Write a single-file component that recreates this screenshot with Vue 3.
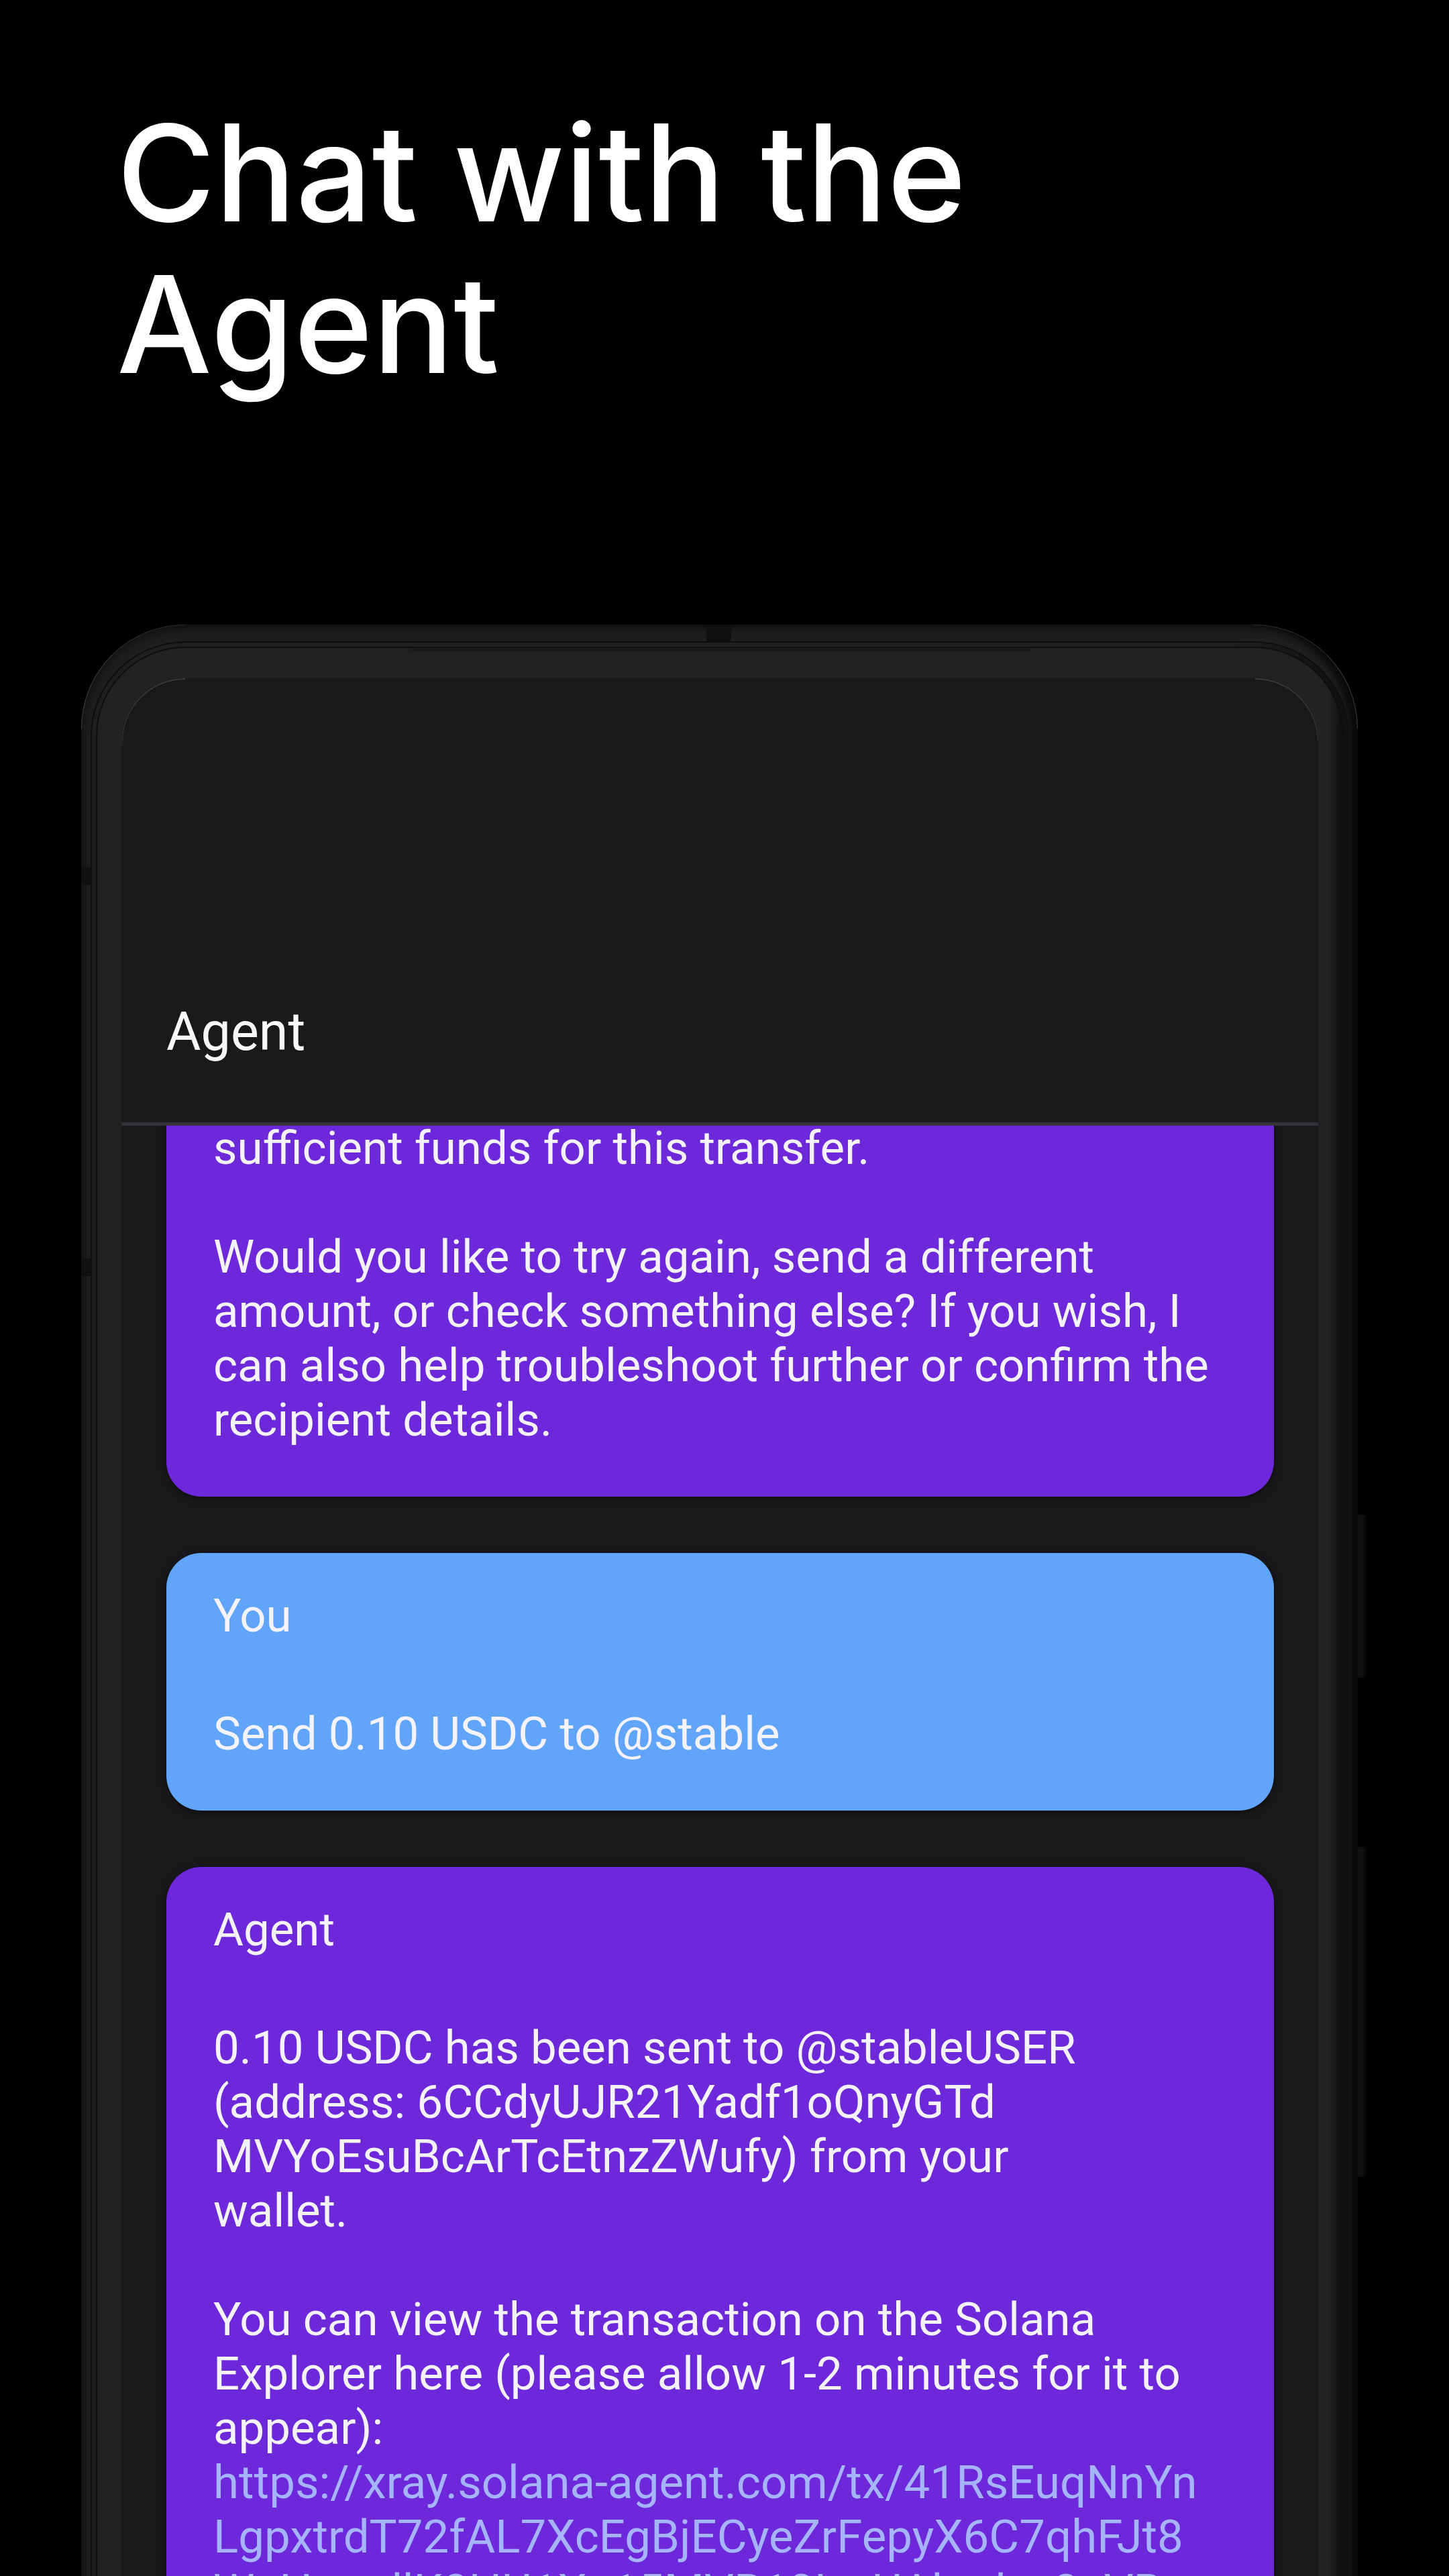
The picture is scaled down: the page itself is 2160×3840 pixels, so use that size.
<script setup>
const messages = [
  {
    kind: 'agent',
    scrolled: true,
    text: `sufficient funds for this transfer.

Would you like to try again, send a different
amount, or check something else? If you wish, I
can also help troubleshoot further or confirm the
recipient details.`,
  },
  {
    kind: 'user',
    sender: 'You',
    text: 'Send 0.10 USDC to @stable',
  },
  {
    kind: 'agent',
    sender: 'Agent',
    text: `0.10 USDC has been sent to @stableUSER
(address: 6CCdyUJR21Yadf1oQnyGTd
MVYoEsuBcArTcEtnzZWufy) from your
wallet.

You can view the transaction on the Solana
Explorer here (please allow 1-2 minutes for it to
appear):`,
    link: [
      'https://xray.solana-agent.com/tx/41RsEuqNnYn',
      'LgpxtrdT72fAL7XcEgBjECyeZrFepyX6C7qhFJt8',
      'WuHxnrdlK8HU1Xa15MVR10LwUAbxdxs8aVR',
    ],
  },
]
</script>

<template>
  <main class="page">
    <h1 class="title">Chat with the Agent</h1>

    <div class="phone">
      <span class="antenna antenna-top"></span>
      <span class="antenna antenna-left-upper"></span>
      <span class="antenna antenna-left-lower"></span>
      <span class="key key-power"></span>
      <span class="key key-volume"></span>

      <div class="ring">
        <div class="bezel">
          <span class="earpiece"></span>
          <section class="screen">
            <header class="bar">
              <h2 class="bar-title">Agent</h2>
            </header>
            <div class="chat">
              <article
                v-for="(message, i) in messages"
                :key="i"
                class="card"
                :class="[message.kind, { scrolled: message.scrolled }]"
              >
                <h3 v-if="message.sender" class="sender">{{ message.sender }}</h3>
                <p class="text">{{ message.text }}</p>
                <a v-if="message.link" class="link" :href="message.link.join('')">{{ message.link.join('\n') }}</a>
              </article>
            </div>
          </section>
        </div>
      </div>
    </div>
  </main>
</template>

<style>
body {
  margin: 0;
  background: #000;
}
</style>

<style scoped>
.page {
  display: flex;
  flex-direction: column;
  height: 100vh;
  overflow: hidden;
  background: #000;
  font-family: Roboto, "Liberation Sans", sans-serif;
}

.title {
  flex: none;
  margin: 0 174px 335px;
  padding-top: 144px;
  color: #fff;
  font: 500 200px/226px Inter, "Open Sans", sans-serif;
}

/* device frame */
.phone {
  position: relative;
  flex: none;
  margin: 0 136px 0 121px;
  padding: 25px 13px 0 14px;
  border-radius: 155px 155px 0 0;
  background: #202020;
  box-shadow: inset -12px 0 8px #0b0b0b, inset 0 0 24px #0a0a0a;
}

.ring {
  padding: 6px 6px 0;
  border: 2px solid #0e0e0e;
  border-bottom: 0;
  border-radius: 141px 141px 0 0;
  background: linear-gradient(to right, #1d1d1d, #202020 10%, #202020 90%, #101010);
}

.bezel {
  position: relative;
  padding: 45px 36px 0 37px;
  border: 2px solid #0e0e0e;
  border-bottom: 0;
  border-radius: 133px 133px 0 0;
  background: linear-gradient(to right, #202020, #222 12px, #222 calc(100% - 22px), #0f0f0f);
}

.earpiece {
  position: absolute;
  top: 0;
  left: 50%;
  width: 50%;
  height: 5px;
  background: #1b1b1b;
  transform: translateX(-50%);
}

.antenna {
  position: absolute;
  background: #101010;
}

.antenna-top {
  top: 0;
  left: 49%;
  width: 37px;
  height: 25px;
}

.antenna-left-upper,
.antenna-left-lower {
  left: 0;
  width: 14px;
  height: 26px;
}

.antenna-left-upper {
  top: 362px;
}

.antenna-left-lower {
  top: 945px;
}

.key {
  position: absolute;
  left: 100%;
  width: 12px;
  border-radius: 0 2px 2px 0;
  background: linear-gradient(to right, #111 8px, #0a0a0a 9px);
}

.key-power {
  top: 1327px;
  height: 243px;
}

.key-volume {
  top: 1822px;
  height: 492px;
}

/* light catching the rounded corners of the frame and the glass */
.phone::before,
.phone::after,
.screen::before,
.screen::after {
  content: "";
  position: absolute;
  z-index: 2;
  top: 0;
  box-sizing: border-box;
}

.phone::before,
.phone::after {
  width: 155px;
  height: 155px;
  border-top: 1px solid #2c2c2c;
}

.screen::before,
.screen::after {
  width: 94px;
  height: 94px;
  border-top: 2px solid #3c3c3c;
}

.phone::before,
.screen::before {
  left: 0;
  border-left: 1px solid #3c3c3c;
  border-top-left-radius: 100%;
}

.phone::after,
.screen::after {
  right: 0;
  border-right: 1px solid #3c3c3c;
  border-top-right-radius: 100%;
}

/* app */
.screen {
  position: relative;
  overflow: hidden;
  border-radius: 94px 94px 0 0;
  background: #19191b;
}

.bar {
  position: relative;
  z-index: 1;
  padding: 482px 66px 90px;
  border-bottom: 5px solid #343339;
  background: #19191b;
}

.bar-title {
  margin: 0;
  color: #f8f8f8;
  font-size: 79px;
  font-weight: 450;
  line-height: 90px;
}

.chat {
  display: flex;
  flex-direction: column;
  gap: 84px;
  margin-top: -7px;
  padding: 0 66px;
}

.card {
  padding: 53px 70px 74px;
  border-radius: 52px;
  box-shadow: 0 2px 8px #0d0d0d;
  color: #f4f2fb;
  font-size: 69px;
  font-weight: 450;
  line-height: 81px;
}

.card.agent {
  background: #6d28d9;
}

.card.user {
  background: #60a5fa;
}

.card.scrolled {
  padding-top: 0;
  border-radius: 0 0 52px 52px;
}

.sender {
  margin: 0 0 95px;
  font-size: 69px;
  font-weight: 450;
}

.text {
  margin: 0;
  white-space: pre;
}

.link {
  display: block;
  color: #a5b4fc;
  text-decoration: none;
  white-space: pre;
}
</style>
